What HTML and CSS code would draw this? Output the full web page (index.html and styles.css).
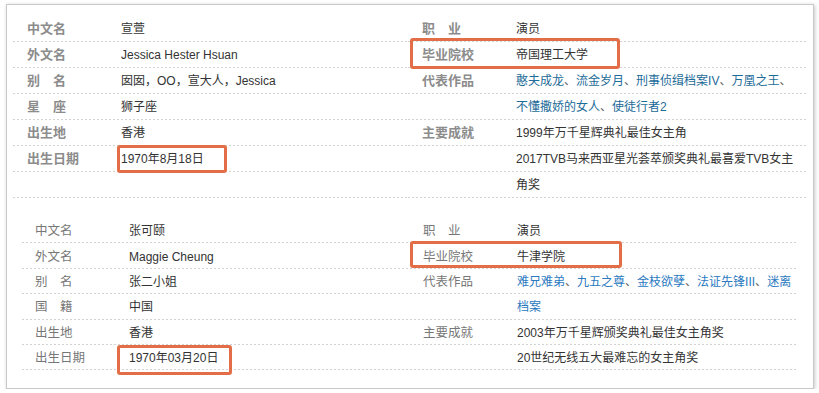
FILE: index.html
```html
<!DOCTYPE html>
<html lang="zh-CN">
<head>
<meta charset="utf-8">
<title>基本信息</title>
<link rel="stylesheet" href="styles.css">
</head>
<body>
<div class="frame">
  <div class="info info-a">
    <div class="item"><span class="name">中文名</span><span class="val">宣萱</span></div>
    <div class="item"><span class="name">职　业</span><span class="val">演员</span></div>

    <div class="item"><span class="name">外文名</span><span class="val">Jessica Hester Hsuan</span></div>
    <div class="item"><span class="name">毕业院校</span><span class="val">帝国理工大学</span><span class="mark mark-a2"></span></div>

    <div class="item"><span class="name">别　名</span><span class="val">囡囡，OO，宣大人，Jessica</span></div>
    <div class="item"><span class="name">代表作品</span><span class="val"><a href="#">憨夫成龙</a><i>、</i><a href="#">流金岁月</a><i>、</i><a href="#">刑事侦缉档案IV</a><i>、</i><a href="#">万凰之王</a><i>、</i></span></div>

    <div class="item"><span class="name">星　座</span><span class="val">狮子座</span></div>
    <div class="item"><span class="name"></span><span class="val"><a href="#">不懂撒娇的女人</a><i>、</i><a href="#">使徒行者2</a></span></div>

    <div class="item"><span class="name">出生地</span><span class="val">香港</span></div>
    <div class="item"><span class="name">主要成就</span><span class="val">1999年万千星辉典礼最佳女主角</span></div>

    <div class="item"><span class="name">出生日期</span><span class="val">1970年8月18日</span><span class="mark mark-a1"></span></div>
    <div class="item"><span class="name"></span><span class="val">2017TVB马来西亚星光荟萃颁奖典礼最喜爱TVB女主</span></div>

    <div class="item"><span class="name"></span><span class="val"></span></div>
    <div class="item"><span class="name"></span><span class="val">角奖</span></div>
  </div>

  <div class="info info-b">
    <div class="item"><span class="name">中文名</span><span class="val">张可颐</span></div>
    <div class="item"><span class="name">职　业</span><span class="val">演员</span></div>

    <div class="item"><span class="name">外文名</span><span class="val">Maggie Cheung</span></div>
    <div class="item"><span class="name">毕业院校</span><span class="val">牛津学院</span><span class="mark mark-b2"></span></div>

    <div class="item"><span class="name">别　名</span><span class="val">张二小姐</span></div>
    <div class="item"><span class="name">代表作品</span><span class="val"><a href="#">难兄难弟</a><i>、</i><a href="#">九五之尊</a><i>、</i><a href="#">金枝欲孽</a><i>、</i><a href="#">法证先锋III</a><i>、</i><a href="#">迷离</a></span></div>

    <div class="item"><span class="name">国　籍</span><span class="val">中国</span></div>
    <div class="item"><span class="name"></span><span class="val"><a href="#">档案</a></span></div>

    <div class="item"><span class="name">出生地</span><span class="val">香港</span></div>
    <div class="item"><span class="name">主要成就</span><span class="val">2003年万千星辉颁奖典礼最佳女主角奖</span></div>

    <div class="item"><span class="name">出生日期</span><span class="val">1970年03月20日</span><span class="mark mark-b1"></span></div>
    <div class="item"><span class="name"></span><span class="val">20世纪无线五大最难忘的女主角奖</span></div>
  </div>
</div>
</body>
</html>
```

FILE: styles.css
```css
html, body {
  margin: 0;
  background: #ffffff;
}

body {
  padding: 4px 0 0 6px;
  font-family: "Liberation Sans", Arial, "Noto Sans CJK SC", sans-serif;
  color: #333333;
}

.frame {
  box-sizing: border-box;
  width: 808px;
  height: 385px;
  border: 1px solid #c9c9c9;
  background: #ffffff;
  box-shadow: 1px 1px 4px rgba(0, 0, 0, 0.22);
  overflow: hidden;
}

.info {
  display: grid;
}

.item {
  position: relative;
  display: flex;
  align-items: center;
  white-space: nowrap;
  background-image: repeating-linear-gradient(to right, #d2d2d2 0 2px, transparent 2px 4px);
  background-repeat: no-repeat;
  background-position: left bottom;
  background-size: 100% 1px;
}

.name {
  flex: none;
  box-sizing: border-box;
}

.val {
  font-size: 12px;
  color: #333333;
}

.val a {
  text-decoration: none;
}

.val i {
  font-style: normal;
  color: #666666;
}

/* first block */
.info-a {
  margin: 11px 0 0 6px;
  grid-template-columns: 395px 400px;
  grid-auto-rows: 26px;
}

.info-a .item {
  box-sizing: border-box;
  padding: 1px 0 1px;
  line-height: 24px;
}

.info-a .name {
  width: 108px;
  padding-left: 14px;
  font-size: 13px;
  font-weight: bold;
  color: #8c8c8c;
}

.info-a .val a {
  color: #1d6b98;
}

/* second block */
.info-b {
  margin: 20px 0 0 15px;
  grid-template-columns: 388px 388px;
  grid-auto-rows: 25.4px;
}

.info-b .item {
  box-sizing: border-box;
  padding: 2px 0 1px;
  line-height: 22px;
}

.info-b .name {
  width: 107px;
  padding-left: 13px;
  font-size: 12.5px;
  color: #777777;
}

.info-b .val a {
  color: #2a79bf;
}

/* orange annotation frames */
.mark {
  position: absolute;
  box-sizing: border-box;
  border: 3px solid #e26d47;
  border-radius: 3px;
  pointer-events: none;
}

.mark-a1 {
  left: 104px;
  top: -1px;
  width: 110px;
  height: 28px;
}

.mark-a2 {
  left: 2px;
  top: -4px;
  width: 210px;
  height: 31px;
}

.mark-b1 {
  left: 95px;
  top: 0;
  width: 115px;
  height: 30px;
}

.mark-b2 {
  left: 0;
  top: -2px;
  width: 212px;
  height: 27px;
}
```
